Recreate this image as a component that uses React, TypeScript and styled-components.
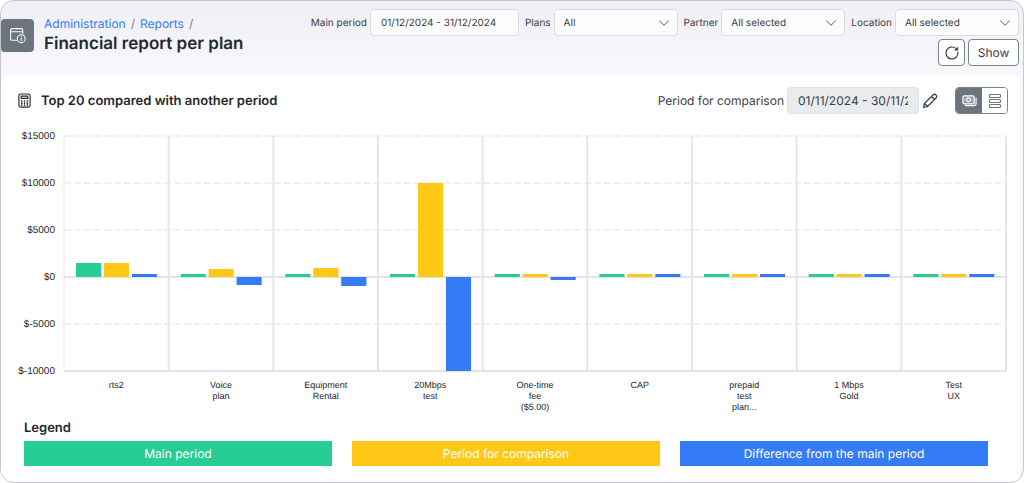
import React from "react";
import styled, { createGlobalStyle } from "styled-components";

const GlobalStyle = createGlobalStyle`
  *, *::before, *::after { box-sizing: border-box; }
  body { margin: 0; background: #fff; font-family: Inter, "Liberation Sans", sans-serif; color: #24292e; text-rendering: geometricPrecision; }
  h1, h2, h3 { margin: 0; font-weight: 600; }
  input, select, button { font: inherit; color: inherit; text-rendering: inherit; }
`;

const Frame = styled.div`
  min-height: 100vh;
  border: 1px solid #c6c7cb;
  border-radius: 14px;
  overflow: hidden;
  background: linear-gradient(#efeff4, #f7f7fc 74px);
  padding-right: 3px;
`;

const Header = styled.header`
  display: flex;
  justify-content: space-between;
  align-items: flex-start;
  height: 74px;
  padding-right: 1px;
`;

const TitleArea = styled.div`
  display: flex;
  align-items: center;
  gap: 10px;
  padding-top: 14px;
`;

const PageIcon = styled.span`
  display: grid;
  place-items: center;
  width: 33px;
  height: 33px;
  border-radius: 4px;
  background: #6c757d;
  color: #fff;
`;

const Breadcrumbs = styled.nav`
  display: flex;
  gap: 5px;
  font-size: 12px;
  line-height: 18px;
  color: #7b828a;
`;

const Crumb = styled.a`
  color: #357bf5;
  text-decoration: none;
`;

const PageTitle = styled.h1`
  font-size: 17px;
  line-height: 22px;
`;

const Controls = styled.div`
  display: flex;
  flex-direction: column;
  align-items: flex-end;
  gap: 3px;
  padding-top: 8px;
`;

const Filters = styled.form`
  display: flex;
  gap: 6px;
  color: #3a4047;
`;

const Field = styled.div`
  display: flex;
  align-items: center;
  gap: 3px;
  font-size: 10px;
`;

const DateInput = styled.input`
  width: 149px;
  height: 27px;
  padding: 0 10px;
  border: 1px solid #d9dce0;
  border-radius: 4px;
  background: #fcfcfd;
`;

const SelectBox = styled.span`
  display: grid;
  align-items: center;
  width: 124px;

  > * { grid-area: 1 / 1; }
  > svg { justify-self: end; margin-right: 8px; color: #757b82; pointer-events: none; }
`;

const Select = styled.select`
  width: 100%;
  height: 27px;
  padding: 0 9px;
  appearance: none;
  border: 1px solid #d9dce0;
  border-radius: 4px;
  background: #fcfcfd;
`;

const Actions = styled.div`
  display: flex;
  gap: 3px;
`;

const ActionButton = styled.button<{ $width: number }>`
  display: grid;
  place-items: center;
  width: ${(p) => p.$width}px;
  height: 27px;
  padding: 0;
  border: 1px solid #7b838a;
  border-radius: 4px;
  background: #fff;
  font-size: 12px;
  color: #3a4047;
`;

const Panel = styled.main`
  padding: 12px 12px 15px 16px;
  border-radius: 8px 8px 0 0;
  background: #fff;
`;

const PanelHeader = styled.div`
  display: flex;
  align-items: center;
  gap: 9px;
`;

const PanelTitle = styled.h2`
  flex: 1;
  font-size: 13px;
  line-height: 18px;
`;

const Comparison = styled.div`
  display: flex;
  align-items: center;
  gap: 3px;
  font-size: 12px;
  color: #3a4047;
`;

const ComparisonInput = styled.input`
  width: 132px;
  height: 27px;
  padding: 0 10px;
  border: 1px solid #dfe2e6;
  border-radius: 4px;
  background: #e9ecef;
`;

const IconButton = styled.button`
  display: grid;
  place-items: center;
  width: 16px;
  height: 27px;
  padding: 0;
  border: 0;
  background: none;
`;

const ViewSwitch = styled.div`
  display: flex;
  margin-left: 8px;
  border: 1px solid #7b838a;
  border-radius: 4px;
  overflow: hidden;
`;

const ViewButton = styled.button<{ $active?: boolean }>`
  display: grid;
  place-items: center;
  width: ${(p) => (p.$active ? 26 : 25)}px;
  height: 25px;
  padding: 0;
  border: 0;
  background: ${(p) => (p.$active ? "#6c757d" : "#fff")};
  color: ${(p) => (p.$active ? "#fff" : "#6c757d")};
`;

const Chart = styled.figure`
  display: grid;
  grid-template-columns: 40px 1fr;
  column-gap: 7px;
  margin: 22px 2px 0 0;
  font: 10px/11px "Liberation Sans", Arial, sans-serif;
`;

const ValueAxis = styled.div`
  display: flex;
  flex-direction: column;
  justify-content: space-between;
  height: 246px;
  margin-top: -5px;
  padding-right: 2px;
  text-align: right;
`;

const Plot = styled.svg`
  display: block;
  width: 100%;
  height: 235px;
  overflow: visible;
`;

const CategoryAxis = styled.div`
  grid-column: 2;
  display: grid;
  grid-template-columns: repeat(9, 1fr);
  min-height: 41px;
  padding-top: 3px;
  font-size: 9px;
  text-align: center;
  white-space: pre-line;
`;

const LegendTitle = styled.h3`
  padding: 0 7px;
  font-size: 13px;
  line-height: 20px;
`;

const Legend = styled.div`
  display: grid;
  grid-template-columns: repeat(3, 1fr);
  gap: 20px;
  margin-top: 3px;
  padding: 0 20px 0 7px;
`;

const LegendItem = styled.div<{ $color: string }>`
  background: ${(p) => p.$color};
  color: #fff;
  font-size: 12px;
  line-height: 25px;
  text-align: center;
`;

const GREEN = "#28cc95";
const YELLOW = "#ffc816";
const BLUE = "#357bf5";
const SERIES = [GREEN, YELLOW, BLUE];
const TICKS = [15000, 10000, 5000, 0, -5000, -10000];
const ZERO = 141;

/* Bar heights in pixels; negative values hang below the zero line. */
const PLANS: { name: string; bars: number[] }[] = [
  { name: "rts2", bars: [14, 14, 3] },
  { name: "Voice\nplan", bars: [3, 8, -8] },
  { name: "Equipment\nRental", bars: [3, 9, -9] },
  { name: "20Mbps\ntest", bars: [3, 94, -94] },
  { name: "One-time\nfee\n($5.00)", bars: [3, 3, -3] },
  { name: "CAP", bars: [3, 3, 3] },
  { name: "prepaid\ntest\nplan...", bars: [3, 3, 3] },
  { name: "1 Mbps\nGold", bars: [3, 3, 3] },
  { name: "Test\nUX", bars: [3, 3, 3] },
];
const STEP = 100 / PLANS.length;

function Stroke({ size, width = 1, children }: { size: number; width?: number; children: React.ReactNode }) {
  return (
    <svg width={size} height={size} viewBox="0 0 16 16" fill="none" stroke="currentColor"
      strokeWidth={width} strokeLinecap="round" strokeLinejoin="round" aria-hidden="true">
      {children}
    </svg>
  );
}

function SelectField({ id, label, value }: { id: string; label: string; value: string }) {
  return (
    <Field>
      <label htmlFor={id}>{label}</label>
      <SelectBox>
        <Select id={id}><option>{value}</option></Select>
        <Stroke size={12} width={1.4}><path d="M2 5l6 6 6-6" /></Stroke>
      </SelectBox>
    </Field>
  );
}

function PlanChart() {
  return (
    <Chart aria-label="Top 20 plans by period">
      <ValueAxis>{TICKS.map((t) => <span key={t}>${t}</span>)}</ValueAxis>
      <Plot>
        {TICKS.map((t, i) => {
          const solid = t === 0 || i === TICKS.length - 1;
          return (
            <line key={t} x1="0" x2="100%" y1={i * 47} y2={i * 47} strokeWidth={2}
              stroke={solid ? "#e4e4e4" : "#f0f0f0"} strokeDasharray={solid ? undefined : "7 3"} />
          );
        })}
        {[...PLANS, null].map((_, i) => (
          <line key={i} x1={`${i * STEP}%`} x2={`${i * STEP}%`} y1="0" y2="235" stroke="#e6e6e6" strokeWidth={i ? 2 : 1} />
        ))}
        {PLANS.map((plan, i) => (
          <svg key={plan.name} x={`${i * STEP}%`} width={`${STEP}%`} height="235">
            {plan.bars.map((h, s) => (
              <rect key={s} x={`${11.5 + s * 26.7}%`} width="24%" y={h > 0 ? ZERO - h : ZERO}
                height={Math.abs(h)} fill={SERIES[s]} />
            ))}
          </svg>
        ))}
      </Plot>
      <CategoryAxis>{PLANS.map((p) => <span key={p.name}>{p.name}</span>)}</CategoryAxis>
    </Chart>
  );
}

export default function App() {
  return (
    <>
      <GlobalStyle />
      <Frame>
        <Header>
          <TitleArea>
            <PageIcon>
              <Stroke size={17}>
                <path d="M7 12.500H3a1.500 1.500 0 0 1-1.500-1.500V3A1.500 1.500 0 0 1 3 1.500h8.500A1.500 1.500 0 0 1 13 3v3M1.500 4.500H13" />
                <circle cx="11.500" cy="11" r="3.700" />
                <path d="M11.500 10.700v2M11.500 9v.1" />
              </Stroke>
            </PageIcon>
            <div>
              <Breadcrumbs aria-label="Breadcrumb">
                <Crumb href="#administration">Administration</Crumb><span>/</span>
                <Crumb href="#reports">Reports</Crumb><span>/</span>
              </Breadcrumbs>
              <PageTitle>Financial report per plan</PageTitle>
            </div>
          </TitleArea>
          <Controls>
            <Filters>
              <Field>
                <label htmlFor="main-period">Main period</label>
                <DateInput id="main-period" defaultValue="01/12/2024 - 31/12/2024" />
              </Field>
              <SelectField id="plans" label="Plans" value="All" />
              <SelectField id="partner" label="Partner" value="All selected" />
              <SelectField id="location" label="Location" value="All selected" />
            </Filters>
            <Actions>
              <ActionButton type="button" $width={27} aria-label="Refresh">
                <Stroke size={16} width={1.2}>
                  <path d="M13.900 7.200A6 6 0 1 1 11.800 3.400L13.300 4.700" />
                  <path d="M13.800 2.200v3h-3z" fill="currentColor" strokeWidth="0.5" />
                </Stroke>
              </ActionButton>
              <ActionButton type="button" $width={51}>Show</ActionButton>
            </Actions>
          </Controls>
        </Header>
        <Panel>
          <PanelHeader>
            <Stroke size={15} width={1.2}>
              <rect x="2" y="1" width="12" height="14" rx="2" />
              <rect x="4.500" y="3.300" width="7" height="2.400" />
              <path strokeWidth="1.800" d="M5 8.500h.1M8 8.500h.1M11 8.500h.1M5 10.700h.1M8 10.700h.1M11 10.700h.1M5 12.800h.1M8 12.800h.1M11 12.800h.1" />
            </Stroke>
            <PanelTitle>Top 20 compared with another period</PanelTitle>
            <Comparison>
              <label htmlFor="comparison">Period for comparison</label>
              <ComparisonInput id="comparison" readOnly defaultValue="01/11/2024 - 30/11/2024" />
              <IconButton type="button" aria-label="Edit period">
                <Stroke size={16} width={1.2}><path d="M1.500 14.500l1-4L11 2a1.800 1.800 0 0 1 3 3l-8.500 8.500zM9.500 3.500l3 3M2.500 10.500l3 3" /></Stroke>
              </IconButton>
            </Comparison>
            <ViewSwitch>
              <ViewButton type="button" $active aria-label="Amounts">
                <Stroke size={15} width={1.3}>
                  <rect x="1" y="3" width="12" height="8.500" rx="1.500" fill="currentColor" fillOpacity="0.25" />
                  <path d="M3.500 13.500H13a2 2 0 0 0 2-2V5.500" />
                  <circle cx="7" cy="7.200" r="2" />
                  <path d="M3.200 7.200h.1M10.700 7.200h.1" />
                </Stroke>
              </ViewButton>
              <ViewButton type="button" aria-label="Rows">
                <Stroke size={16} width={1.2}>
                  <rect x="2.500" y="1.500" width="11" height="3" rx="1" />
                  <rect x="2.500" y="6.500" width="11" height="3" rx="1" />
                  <rect x="2.500" y="11.500" width="11" height="3" rx="1" />
                </Stroke>
              </ViewButton>
            </ViewSwitch>
          </PanelHeader>
          <PlanChart />
          <LegendTitle>Legend</LegendTitle>
          <Legend>
            <LegendItem $color={GREEN}>Main period</LegendItem>
            <LegendItem $color={YELLOW}>Period for comparison</LegendItem>
            <LegendItem $color={BLUE}>Difference from the main period</LegendItem>
          </Legend>
        </Panel>
      </Frame>
    </>
  );
}
